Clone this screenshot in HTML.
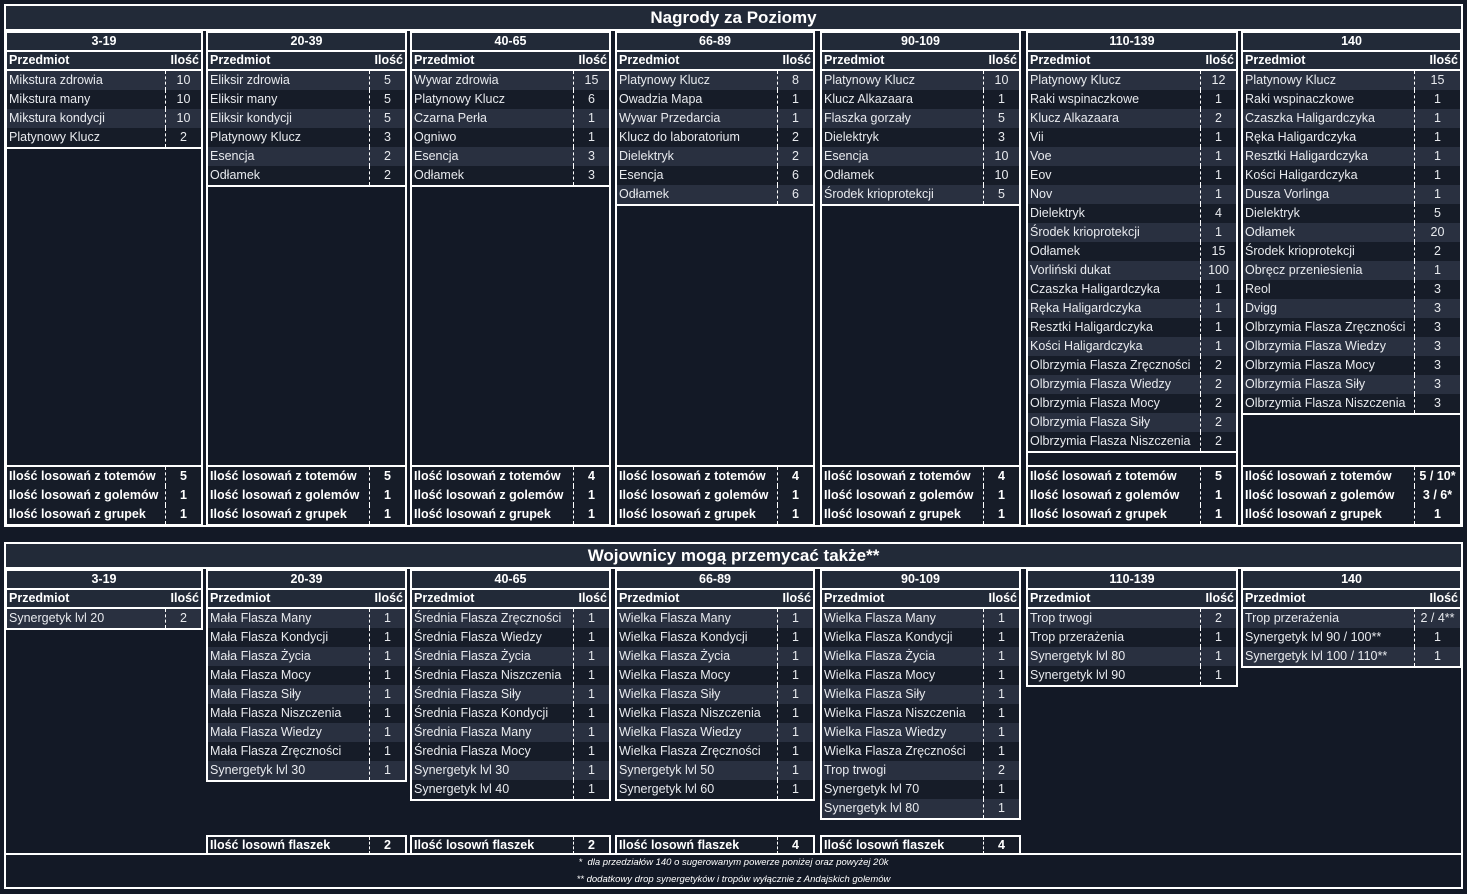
<!DOCTYPE html>
<html><head><meta charset="utf-8"><style>
*{box-sizing:border-box;margin:0;padding:0}
body{width:1467px;height:894px;background:#131926;font-family:"Liberation Sans",sans-serif;color:#e8eaee;font-size:12.5px;position:relative;overflow:hidden}
.box{position:absolute;border:2px solid #fff}
.title{position:absolute;left:0;right:0;top:0;height:25px;background:#222a38;border-bottom:2px solid #fff;text-align:center;font-weight:bold;font-size:17px;line-height:23px;color:#fff}
.col{position:absolute;border:2px solid #fff;background:#131926}
.h{height:19px;background:#222a38;border-bottom:2px solid #fff;text-align:center;font-weight:bold;line-height:17px;color:#fff}
.sh{height:19px;background:#222a38;border-bottom:2px solid #fff;display:flex;justify-content:space-between;font-weight:bold;line-height:17px;padding:0 2px 0 2px;color:#fff}
.list{border-bottom:2px solid #fff}
.r{height:19px;display:flex;line-height:19px;background:#161c28}
.r:nth-child(odd){background:#293040}
.r span{flex:1;padding-left:2px;white-space:nowrap;overflow:hidden}
.r i{font-style:normal;width:var(--q,36px);border-left:1px dashed #fff;text-align:center}
.st{position:absolute;left:0;right:0;bottom:0;border-top:2px solid #fff;background:#161c28}
.st .r{background:#161c28;font-weight:bold;color:#fff}
.fl{position:absolute;top:835px;height:19px;border:2px solid #fff;border-bottom:none;display:flex;font-weight:bold;line-height:17px;background:#161c28;color:#fff}
.fl span{flex:1;padding-left:2px}.fl i{font-style:normal;width:36px;border-left:1px dashed #fff;text-align:center}
.fn{position:absolute;left:0;width:1467px;text-align:center;font-style:italic;font-size:9.5px;color:#fff}
</style></head><body>

<div class="box" style="left:4px;top:4px;width:1459px;height:523px"><div class="title">Nagrody za Poziomy</div></div>

<div class="col" style="left:5px;top:31px;width:198px;height:495px"><div class="h">3-19</div><div class="sh"><span>Przedmiot</span><span>Ilość</span></div>
<div class="list"><div class="r"><span>Mikstura zdrowia</span><i>10</i></div><div class="r"><span>Mikstura many</span><i>10</i></div><div class="r"><span>Mikstura kondycji</span><i>10</i></div><div class="r"><span>Platynowy Klucz</span><i>2</i></div></div>
<div class="st"><div class="r"><span>Ilość losowań z totemów</span><i>5</i></div><div class="r"><span>Ilość losowań z golemów</span><i>1</i></div><div class="r"><span>Ilość losowań z grupek</span><i>1</i></div></div></div>

<div class="col" style="left:206px;top:31px;width:201px;height:495px"><div class="h">20-39</div><div class="sh"><span>Przedmiot</span><span>Ilość</span></div>
<div class="list"><div class="r"><span>Eliksir zdrowia</span><i>5</i></div><div class="r"><span>Eliksir many</span><i>5</i></div><div class="r"><span>Eliksir kondycji</span><i>5</i></div><div class="r"><span>Platynowy Klucz</span><i>3</i></div><div class="r"><span>Esencja</span><i>2</i></div><div class="r"><span>Odłamek</span><i>2</i></div></div>
<div class="st"><div class="r"><span>Ilość losowań z totemów</span><i>5</i></div><div class="r"><span>Ilość losowań z golemów</span><i>1</i></div><div class="r"><span>Ilość losowań z grupek</span><i>1</i></div></div></div>

<div class="col" style="left:410px;top:31px;width:201px;height:495px"><div class="h">40-65</div><div class="sh"><span>Przedmiot</span><span>Ilość</span></div>
<div class="list"><div class="r"><span>Wywar zdrowia</span><i>15</i></div><div class="r"><span>Platynowy Klucz</span><i>6</i></div><div class="r"><span>Czarna Perła</span><i>1</i></div><div class="r"><span>Ogniwo</span><i>1</i></div><div class="r"><span>Esencja</span><i>3</i></div><div class="r"><span>Odłamek</span><i>3</i></div></div>
<div class="st"><div class="r"><span>Ilość losowań z totemów</span><i>4</i></div><div class="r"><span>Ilość losowań z golemów</span><i>1</i></div><div class="r"><span>Ilość losowań z grupek</span><i>1</i></div></div></div>

<div class="col" style="left:615px;top:31px;width:200px;height:495px"><div class="h">66-89</div><div class="sh"><span>Przedmiot</span><span>Ilość</span></div>
<div class="list"><div class="r"><span>Platynowy Klucz</span><i>8</i></div><div class="r"><span>Owadzia Mapa</span><i>1</i></div><div class="r"><span>Wywar Przedarcia</span><i>1</i></div><div class="r"><span>Klucz do laboratorium</span><i>2</i></div><div class="r"><span>Dielektryk</span><i>2</i></div><div class="r"><span>Esencja</span><i>6</i></div><div class="r"><span>Odłamek</span><i>6</i></div></div>
<div class="st"><div class="r"><span>Ilość losowań z totemów</span><i>4</i></div><div class="r"><span>Ilość losowań z golemów</span><i>1</i></div><div class="r"><span>Ilość losowań z grupek</span><i>1</i></div></div></div>

<div class="col" style="left:820px;top:31px;width:201px;height:495px"><div class="h">90-109</div><div class="sh"><span>Przedmiot</span><span>Ilość</span></div>
<div class="list"><div class="r"><span>Platynowy Klucz</span><i>10</i></div><div class="r"><span>Klucz Alkazaara</span><i>1</i></div><div class="r"><span>Flaszka gorzały</span><i>5</i></div><div class="r"><span>Dielektryk</span><i>3</i></div><div class="r"><span>Esencja</span><i>10</i></div><div class="r"><span>Odłamek</span><i>10</i></div><div class="r"><span>Środek krioprotekcji</span><i>5</i></div></div>
<div class="st"><div class="r"><span>Ilość losowań z totemów</span><i>4</i></div><div class="r"><span>Ilość losowań z golemów</span><i>1</i></div><div class="r"><span>Ilość losowań z grupek</span><i>1</i></div></div></div>

<div class="col" style="left:1026px;top:31px;width:212px;height:495px"><div class="h">110-139</div><div class="sh"><span>Przedmiot</span><span>Ilość</span></div>
<div class="list"><div class="r"><span>Platynowy Klucz</span><i>12</i></div><div class="r"><span>Raki wspinaczkowe</span><i>1</i></div><div class="r"><span>Klucz Alkazaara</span><i>2</i></div><div class="r"><span>Vii</span><i>1</i></div><div class="r"><span>Voe</span><i>1</i></div><div class="r"><span>Eov</span><i>1</i></div><div class="r"><span>Nov</span><i>1</i></div><div class="r"><span>Dielektryk</span><i>4</i></div><div class="r"><span>Środek krioprotekcji</span><i>1</i></div><div class="r"><span>Odłamek</span><i>15</i></div><div class="r"><span>Vorliński dukat</span><i>100</i></div><div class="r"><span>Czaszka Haligardczyka</span><i>1</i></div><div class="r"><span>Ręka Haligardczyka</span><i>1</i></div><div class="r"><span>Resztki Haligardczyka</span><i>1</i></div><div class="r"><span>Kości Haligardczyka</span><i>1</i></div><div class="r"><span>Olbrzymia Flasza Zręczności</span><i>2</i></div><div class="r"><span>Olbrzymia Flasza Wiedzy</span><i>2</i></div><div class="r"><span>Olbrzymia Flasza Mocy</span><i>2</i></div><div class="r"><span>Olbrzymia Flasza Siły</span><i>2</i></div><div class="r"><span>Olbrzymia Flasza Niszczenia</span><i>2</i></div></div>
<div class="st"><div class="r"><span>Ilość losowań z totemów</span><i>5</i></div><div class="r"><span>Ilość losowań z golemów</span><i>1</i></div><div class="r"><span>Ilość losowań z grupek</span><i>1</i></div></div></div>

<div class="col" style="left:1241px;top:31px;width:221px;height:495px;--q:46px"><div class="h">140</div><div class="sh"><span>Przedmiot</span><span>Ilość</span></div>
<div class="list"><div class="r"><span>Platynowy Klucz</span><i>15</i></div><div class="r"><span>Raki wspinaczkowe</span><i>1</i></div><div class="r"><span>Czaszka Haligardczyka</span><i>1</i></div><div class="r"><span>Ręka Haligardczyka</span><i>1</i></div><div class="r"><span>Resztki Haligardczyka</span><i>1</i></div><div class="r"><span>Kości Haligardczyka</span><i>1</i></div><div class="r"><span>Dusza Vorlinga</span><i>1</i></div><div class="r"><span>Dielektryk</span><i>5</i></div><div class="r"><span>Odłamek</span><i>20</i></div><div class="r"><span>Środek krioprotekcji</span><i>2</i></div><div class="r"><span>Obręcz przeniesienia</span><i>1</i></div><div class="r"><span>Reol</span><i>3</i></div><div class="r"><span>Dvigg</span><i>3</i></div><div class="r"><span>Olbrzymia Flasza Zręczności</span><i>3</i></div><div class="r"><span>Olbrzymia Flasza Wiedzy</span><i>3</i></div><div class="r"><span>Olbrzymia Flasza Mocy</span><i>3</i></div><div class="r"><span>Olbrzymia Flasza Siły</span><i>3</i></div><div class="r"><span>Olbrzymia Flasza Niszczenia</span><i>3</i></div></div>
<div class="st"><div class="r"><span>Ilość losowań z totemów</span><i>5 / 10*</i></div><div class="r"><span>Ilość losowań z golemów</span><i>3 / 6*</i></div><div class="r"><span>Ilość losowań z grupek</span><i>1</i></div></div></div>

<!-- section 2 -->
<div class="box" style="left:4px;top:542px;width:1459px;height:347px"><div class="title">Wojownicy mogą przemycać także**</div></div>

<div class="col" style="left:5px;top:569px;width:198px;height:61px"><div class="h">3-19</div><div class="sh"><span>Przedmiot</span><span>Ilość</span></div>
<div><div class="r"><span>Synergetyk lvl 20</span><i>2</i></div></div></div>

<div class="col" style="left:206px;top:569px;width:201px;height:213px"><div class="h">20-39</div><div class="sh"><span>Przedmiot</span><span>Ilość</span></div>
<div><div class="r"><span>Mała Flasza Many</span><i>1</i></div><div class="r"><span>Mała Flasza Kondycji</span><i>1</i></div><div class="r"><span>Mała Flasza Życia</span><i>1</i></div><div class="r"><span>Mała Flasza Mocy</span><i>1</i></div><div class="r"><span>Mała Flasza Siły</span><i>1</i></div><div class="r"><span>Mała Flasza Niszczenia</span><i>1</i></div><div class="r"><span>Mała Flasza Wiedzy</span><i>1</i></div><div class="r"><span>Mała Flasza Zręczności</span><i>1</i></div><div class="r"><span>Synergetyk lvl 30</span><i>1</i></div></div></div>

<div class="col" style="left:410px;top:569px;width:201px;height:232px"><div class="h">40-65</div><div class="sh"><span>Przedmiot</span><span>Ilość</span></div>
<div><div class="r"><span>Średnia Flasza Zręczności</span><i>1</i></div><div class="r"><span>Średnia Flasza Wiedzy</span><i>1</i></div><div class="r"><span>Średnia Flasza Życia</span><i>1</i></div><div class="r"><span>Średnia Flasza Niszczenia</span><i>1</i></div><div class="r"><span>Średnia Flasza Siły</span><i>1</i></div><div class="r"><span>Średnia Flasza Kondycji</span><i>1</i></div><div class="r"><span>Średnia Flasza Many</span><i>1</i></div><div class="r"><span>Średnia Flasza Mocy</span><i>1</i></div><div class="r"><span>Synergetyk lvl 30</span><i>1</i></div><div class="r"><span>Synergetyk lvl 40</span><i>1</i></div></div></div>

<div class="col" style="left:615px;top:569px;width:200px;height:232px"><div class="h">66-89</div><div class="sh"><span>Przedmiot</span><span>Ilość</span></div>
<div><div class="r"><span>Wielka Flasza Many</span><i>1</i></div><div class="r"><span>Wielka Flasza Kondycji</span><i>1</i></div><div class="r"><span>Wielka Flasza Życia</span><i>1</i></div><div class="r"><span>Wielka Flasza Mocy</span><i>1</i></div><div class="r"><span>Wielka Flasza Siły</span><i>1</i></div><div class="r"><span>Wielka Flasza Niszczenia</span><i>1</i></div><div class="r"><span>Wielka Flasza Wiedzy</span><i>1</i></div><div class="r"><span>Wielka Flasza Zręczności</span><i>1</i></div><div class="r"><span>Synergetyk lvl 50</span><i>1</i></div><div class="r"><span>Synergetyk lvl 60</span><i>1</i></div></div></div>

<div class="col" style="left:820px;top:569px;width:201px;height:251px"><div class="h">90-109</div><div class="sh"><span>Przedmiot</span><span>Ilość</span></div>
<div><div class="r"><span>Wielka Flasza Many</span><i>1</i></div><div class="r"><span>Wielka Flasza Kondycji</span><i>1</i></div><div class="r"><span>Wielka Flasza Życia</span><i>1</i></div><div class="r"><span>Wielka Flasza Mocy</span><i>1</i></div><div class="r"><span>Wielka Flasza Siły</span><i>1</i></div><div class="r"><span>Wielka Flasza Niszczenia</span><i>1</i></div><div class="r"><span>Wielka Flasza Wiedzy</span><i>1</i></div><div class="r"><span>Wielka Flasza Zręczności</span><i>1</i></div><div class="r"><span>Trop trwogi</span><i>2</i></div><div class="r"><span>Synergetyk lvl 70</span><i>1</i></div><div class="r"><span>Synergetyk lvl 80</span><i>1</i></div></div></div>

<div class="col" style="left:1026px;top:569px;width:212px;height:118px"><div class="h">110-139</div><div class="sh"><span>Przedmiot</span><span>Ilość</span></div>
<div><div class="r"><span>Trop trwogi</span><i>2</i></div><div class="r"><span>Trop przerażenia</span><i>1</i></div><div class="r"><span>Synergetyk lvl 80</span><i>1</i></div><div class="r"><span>Synergetyk lvl 90</span><i>1</i></div></div></div>

<div class="col" style="left:1241px;top:569px;width:221px;height:99px;--q:46px"><div class="h">140</div><div class="sh"><span>Przedmiot</span><span>Ilość</span></div>
<div><div class="r"><span>Trop przerażenia</span><i>2 / 4**</i></div><div class="r"><span>Synergetyk lvl 90 / 100**</span><i>1</i></div><div class="r"><span>Synergetyk lvl 100 / 110**</span><i>1</i></div></div></div>

<div class="fl" style="left:206px;width:201px"><span>Ilość losowń flaszek</span><i>2</i></div>
<div class="fl" style="left:410px;width:201px"><span>Ilość losowń flaszek</span><i>2</i></div>
<div class="fl" style="left:615px;width:200px"><span>Ilość losowń flaszek</span><i>4</i></div>
<div class="fl" style="left:820px;width:201px"><span>Ilość losowń flaszek</span><i>4</i></div>

<div style="position:absolute;left:4px;top:853px;width:1459px;height:2px;background:#fff"></div>
<div class="fn" style="top:857px">*&nbsp; dla przedziałów 140 o sugerowanym powerze poniżej oraz powyżej 20k</div>
<div class="fn" style="top:874px">** dodatkowy drop synergetyków i tropów wyłącznie z Andajskich golemów</div>
</body></html>
